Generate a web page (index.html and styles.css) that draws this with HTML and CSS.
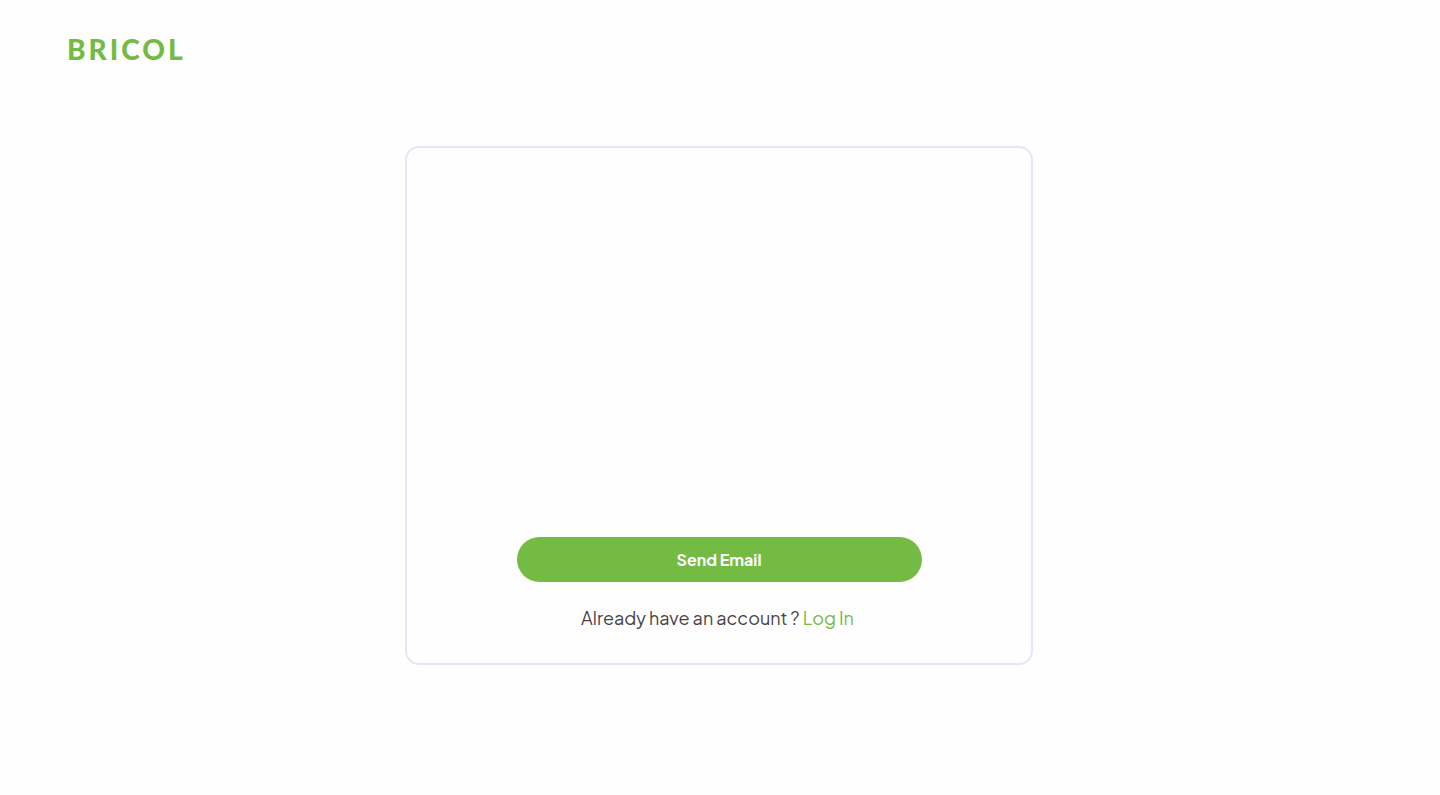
FILE: index.html
```html
<!DOCTYPE html>
<html lang="en">
<head>
<meta charset="utf-8">
<meta name="viewport" content="width=device-width, initial-scale=1">
<title>Bricol</title>
<link rel="stylesheet" href="styles.css">
</head>
<body>
<header class="header"><a class="brand" href="#">BRICOL</a></header>
<main class="main">
  <form class="card">
    <button class="submit" type="button">Send Email</button>
    <p class="note">Already have an account ? <a class="link" href="#">Log In</a></p>
  </form>
</main>
</body>
</html>
```
FILE: styles.css
```css
* {
  box-sizing: border-box;
}

body {
  margin: 0;
  background: #fefefe;
  color: #484245;
  font-family: "Plus Jakarta Sans", Lato, "Open Sans", sans-serif;
}

.header {
  padding: 32px 67px;
}

.brand {
  display: inline-block;
  color: #74bb44;
  font-family: Lato, "Open Sans", sans-serif;
  font-size: 28px;
  font-weight: 900;
  line-height: 34px;
  letter-spacing: 3px;
  text-decoration: none;
}

.main {
  padding: 48px 18px 48px 16px;
}

.card {
  display: flex;
  flex-direction: column;
  justify-content: flex-end;
  align-items: center;
  gap: 24px;
  width: 100%;
  max-width: 628px;
  min-height: 519px;
  margin: 0 auto;
  padding: 32px 16px 34px;
  border: 2px solid #e4e8f6;
  border-radius: 14px;
}

.submit {
  width: 100%;
  max-width: 405px;
  padding: 12px 24px;
  border: 0;
  border-radius: 24px;
  background: #74bb44;
  color: #fefefe;
  font: inherit;
  font-size: 16px;
  font-weight: 700;
  line-height: 21px;
  cursor: pointer;
}

.note {
  margin: 0;
  padding-right: 3px;
  font-size: 18px;
  line-height: 23px;
}

.link {
  color: #74bb44;
  text-decoration: none;
}
```
